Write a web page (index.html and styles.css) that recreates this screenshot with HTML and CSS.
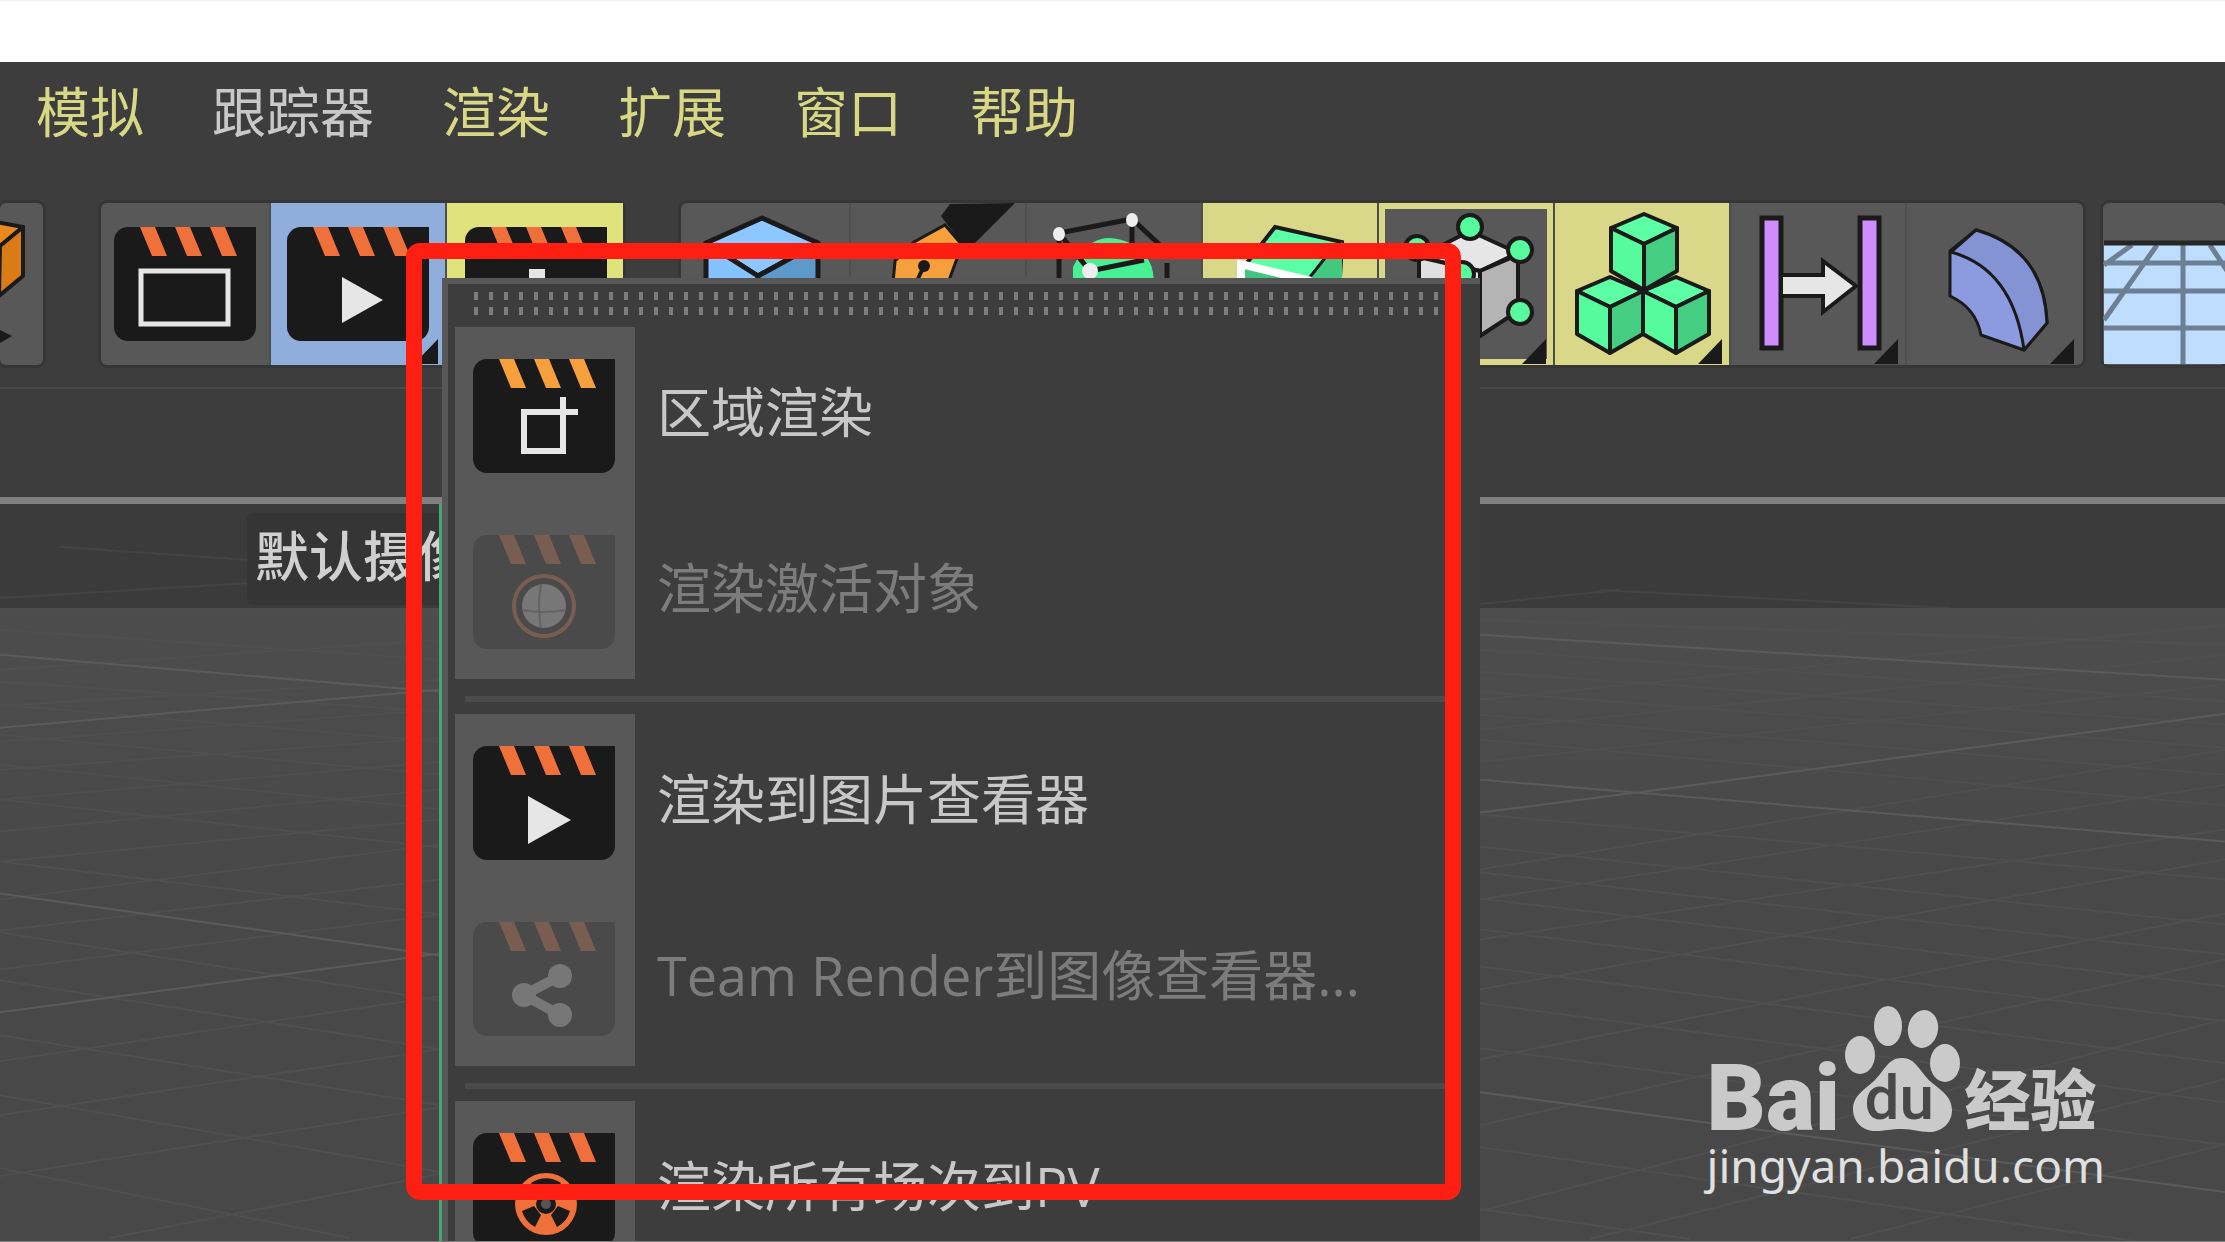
FILE: index.html
```
<!DOCTYPE html>
<html lang="zh-CN">
<head>
    <meta charset="UTF-8">
    <meta name="viewport" content="width=device-width, initial-scale=1.0">
    <title>渲染菜单</title>
    <link rel="stylesheet" href="styles.css">
</head>
<body>
    <!-- shared icon parts -->
    <svg class="defs" aria-hidden="true">
        <symbol id="clapper" viewBox="0 0 142 114">
            <path class="board" d="M14 0H142V100a14 14 0 0 1-14 14H14a14 14 0 0 1-14-14V14A14 14 0 0 1 14 0z"/>
            <path fill="currentColor" d="M26 0h15l12 29H38zM61 0h15l12 29H73zM96 0h15l12 29h-15z"/>
        </symbol>
        <symbol id="corner" viewBox="0 0 24 25"><path d="M0 25L24 0V25z" fill="#1a1a1a"/></symbol>
        <symbol id="cube" viewBox="0 0 72 82">
            <g stroke="#1a1a1a" stroke-width="4" stroke-linejoin="round">
                <path d="M36 3L69 17L36 33L3 17z" fill="#5cffa4"/>
                <path d="M3 17L36 33V79L3 60z" fill="#55fb9d"/>
                <path d="M69 17L36 33V79L69 60z" fill="#45cd82"/>
            </g>
        </symbol>
    </svg>

    <div class="page-top"></div>
    <main class="app">
        <nav class="menubar">
            <button>模拟</button>
            <button class="plain">跟踪器</button>
            <button>渲染</button>
            <button>扩展</button>
            <button>窗口</button>
            <button>帮助</button>
        </nav>

        <div class="toolbar">
            <div class="group first">
                <button class="tool" aria-label="坐标系统">
                    <svg viewBox="0 0 43 164"><g stroke="#1a1a1a" stroke-width="4" stroke-linejoin="round"><path d="M-20 16L23 24L0 43L-20 50z" fill="#e88a1d"/><path d="M0 43L23 24V73L-1 93z" fill="#d97c17"/></g><path d="M0 127l12 6l-12 7z" fill="#1a1a1a"/></svg>
                </button>
            </div>
            <div class="group">
                <button class="tool" aria-label="渲染活动视图">
                    <svg class="red" viewBox="0 0 170 164"><use href="#clapper" x="13" y="24" width="142" height="114"/><rect x="40" y="68" width="87" height="53" fill="none" stroke="#e6e6e6" stroke-width="5"/></svg>
                </button>
                <button class="tool active" aria-label="渲染到图片查看器">
                    <svg class="red" viewBox="0 0 176 164"><use href="#clapper" x="16" y="24" width="142" height="114"/><path d="M71 74V120L112 97z" fill="#e6e6e6"/><use href="#corner" x="143" y="136" width="24" height="25"/></svg>
                </button>
                <button class="tool lit" aria-label="编辑渲染设置">
                    <svg class="red" viewBox="0 0 176 164"><use href="#clapper" x="18" y="24" width="142" height="114"/><path d="M82 66h16v14l12-5l10 10l-6 12l14 4H62l10-16l-6-2l8-8l8 5z" fill="#e6e6e6"/></svg>
                </button>
            </div>
            <div class="group tight">
                <button class="tool" aria-label="立方体">
                    <svg viewBox="0 0 170 164"><g stroke="#1a1a1a" stroke-width="5" stroke-linejoin="round"><path d="M81 15L137 40L77 73L25 40z" fill="#8cc8ff"/><path d="M25 40L77 73V140L25 105z" fill="#84c3ff"/><path d="M137 40L77 73V140L137 105z" fill="#5c9acb"/></g></svg>
                </button>
                <button class="tool" aria-label="样条画笔">
                    <svg viewBox="0 0 176 164"><path d="M99 1L164 0L124 40H110L90 13z" fill="#1a1a1a"/><path d="M94 22L111 42L97 80H42L44 58L63 39z" fill="#f5a03c" stroke="#1a1a1a" stroke-width="3"/><circle cx="73" cy="63" r="6" fill="#1a1a1a"/><path d="M73 63L63 84" stroke="#1a1a1a" stroke-width="4"/></svg>
                </button>
                <button class="tool" aria-label="细分曲面">
                    <svg viewBox="0 0 176 164"><path d="M46 84V64Q60 35 82 35Q108 36 122 58Q127 66 127 84z" fill="#48f094"/><path d="M32 84V30L105 16L133 42M140 60V90M105 16V40M32 30L63 68L117 57" fill="none" stroke="#1a1a1a" stroke-width="5"/><g fill="#eee"><ellipse cx="32" cy="31" rx="6" ry="7"/><ellipse cx="105" cy="17" rx="6" ry="7"/><ellipse cx="63" cy="68" rx="8" ry="8"/></g></svg>
                </button>
                <button class="tool olive" aria-label="挤压">
                    <svg viewBox="0 0 176 164"><path d="M72 24L139 39L135 110L36 100V70z" fill="#5affa6" stroke="#1a1a1a" stroke-width="4"/><path d="M122 55L139 39V110L108 74z" fill="#42c97f"/><path d="M122 55L107 74" stroke="#1a1a1a" stroke-width="3"/><path d="M38 100V60L108 78V100z" fill="#43c480"/><path d="M38 100V61L108 78" fill="none" stroke="#fff" stroke-width="8"/></svg>
                </button>
                <button class="tool framed" aria-label="阵列">
                    <svg viewBox="0 0 176 164"><g stroke="#1a1a1a" stroke-width="4" stroke-linejoin="round"><path d="M91 28L139 50L101 68L40 54z" fill="#e6e6e6"/><path d="M40 54L101 68V133L40 110z" fill="#e0e0e0"/><path d="M139 52L101 68V133L139 108z" fill="#b4b4b4"/><g fill="#55fb9d"><circle cx="91" cy="24" r="12"/><circle cx="141" cy="47" r="12"/><circle cx="38" cy="45" r="12"/><circle cx="141" cy="109" r="12"/><circle cx="83" cy="71" r="12"/></g></g><use href="#corner" x="143" y="136" width="24" height="25"/></svg>
                </button>
                <button class="tool olive" aria-label="克隆">
                    <svg viewBox="0 0 176 164"><use href="#cube" x="53" y="8" width="72" height="82"/><use href="#cube" x="19" y="71" width="72" height="82"/><use href="#cube" x="85" y="71" width="72" height="82"/><use href="#corner" x="143" y="136" width="24" height="25"/></svg>
                </button>
                <button class="tool" aria-label="线性域">
                    <svg viewBox="0 0 176 164"><g fill="#cf8cff" stroke="#1a1a1a" stroke-width="5"><rect x="31" y="15" width="19" height="130"/><rect x="129" y="15" width="19" height="130"/><path d="M50 72H92V58L125 83L92 109V93H50z" fill="#e6e6e6" stroke-width="4"/></g><use href="#corner" x="143" y="136" width="24" height="25"/></svg>
                </button>
                <button class="tool" aria-label="弯曲">
                    <svg viewBox="0 0 176 164"><g stroke="#1a1a1a" stroke-width="3" stroke-linejoin="round"><path d="M69 27L43 48V93Q69 105 74 132L117 147L140 120Q137 46 69 27z" fill="#8c9be0"/><path d="M69 27Q137 46 140 120L117 147Q106 66 44 49z" fill="#8493d3"/></g><use href="#corner" x="143" y="136" width="24" height="25"/></svg>
                </button>
            </div>
            <div class="group last">
                <button class="tool" aria-label="地面">
                    <svg viewBox="0 0 123 164" preserveAspectRatio="xMinYMin slice"><path d="M1 40H123V161H1z" fill="#bfdeff"/><path d="M1 60H123M1 88H123M1 125H123M80 42V161M29 42L1 62M54 42L1 117M107 42L140 92" fill="none" stroke="#6d7f92" stroke-width="5"/><path d="M1 40H123" stroke="#262626" stroke-width="5"/></svg>
                </button>
            </div>
        </div>
        <div class="strip"></div>

        <section class="viewport">
            <svg class="grid" viewBox="0 504 2225 738" preserveAspectRatio="none">
                <path class="minor" d="M0 630L440 660M0 670L440 640M0 682L440 712M0 706L440 680M0 705L440 742M0 742L440 710M0 735L440 775M0 770L440 738M0 765L440 810M0 800L440 762M0 800L440 848M0 832L440 790M0 862L440 915M0 862L440 820M0 900L440 845M0 931L440 880M0 970L440 915M0 933L440 1001M0 981L440 1050M0 1036L440 1106M0 1096L440 1173M0 1169L350 1239M0 1062L440 997M0 1116L440 1050M0 1177L440 1108M110 1239L440 1175"/>
                <path class="minor" d="M1480 620L2225 645M1480 650L2225 702M1480 672L2225 725M1480 692L2225 748M1480 715L2225 775M1480 740L2225 806M1480 815L2225 880M1480 700L2225 625M1480 730L2225 655M1480 762L2225 685M1480 847L2225 925M1480 873L2225 955M1480 899L2225 987M1480 930L2225 1022M1480 967L2225 1064M1480 1004L2225 1103M1480 1049L2225 1146M1480 1148L2225 1255M1480 1210L1690 1240M1480 870L2225 750M1480 900L2225 785M1480 940L2225 830M1480 990L2225 860M1480 1060L2225 914M1480 1126L2225 960M1480 1212L2225 1020M1590 1240L2225 1080M1850 1240L2225 1145"/>
                <path class="major" d="M0 655L440 692M0 728L440 690M0 894L440 956M0 1013L440 954M1480 635L2225 680M1480 780L2225 842M1480 813L1660 790L2225 714M1480 1093L2225 1193"/>
            </svg>
            <svg class="haze" viewBox="0 504 2225 104" preserveAspectRatio="none">
                <path d="M60 547L250 560M0 598L250 583M1480 604L1620 590M1600 590L1950 608"/>
            </svg>
            <span class="camera">默认摄像机</span>
            <div class="axis"></div>
        </section>

        <!-- popup of the render button -->
        <div class="popup">
            <div class="grip"></div>
            <ul>
                <li><button><span class="icon"><svg class="amber" viewBox="0 0 142 114"><use href="#clapper" width="142" height="114"/><path d="M90 92H51V53H105M90 38V95" fill="none" stroke="#e6e6e6" stroke-width="6"/></svg></span>区域渲染</button></li>
                <li><button disabled><span class="icon"><svg class="red" viewBox="0 0 142 114"><use href="#clapper" width="142" height="114"/><circle cx="71" cy="71" r="30" fill="none" stroke="#f0703c" stroke-width="4"/><circle cx="71" cy="71" r="22" fill="#e6e6e6"/><path d="M49 75Q71 79 93 75M68 49Q64 71 68 93" fill="none" stroke="#888" stroke-width="2"/></svg></span>渲染激活对象</button></li>
            </ul>
            <hr>
            <ul>
                <li><button><span class="icon"><svg class="red" viewBox="0 0 142 114"><use href="#clapper" width="142" height="114"/><path d="M55 50V98L98 74z" fill="#e6e6e6"/></svg></span>渲染到图片查看器</button></li>
                <li><button disabled><span class="icon"><svg class="red" viewBox="0 0 142 114"><use href="#clapper" width="142" height="114"/><path d="M87 54L51 73L87 93" fill="none" stroke="#e6e6e6" stroke-width="10"/><g fill="#e6e6e6"><circle cx="87" cy="54" r="12"/><circle cx="51" cy="73" r="12"/><circle cx="87" cy="93" r="12"/></g></svg></span>Team Render到图像查看器...</button></li>
            </ul>
            <hr>
            <ul>
                <li><button><span class="icon"><svg class="red" viewBox="0 0 142 114"><use href="#clapper" width="142" height="114"/><circle cx="73" cy="71" r="31" fill="#f0703c"/><g fill="#1a1a1a"><path d="M68 82L62 94A26 26 0 0 1 49 78L61 73zM78 82L84 94A26 26 0 0 0 97 78L85 73zM66 61L58 50A26 26 0 0 1 88 50L80 61z"/><circle cx="73" cy="71" r="10"/></g><circle cx="73" cy="71" r="5" fill="#555"/></svg></span>渲染所有场次到PV</button></li>
            </ul>
        </div>

        <div class="highlight"></div>

        <a class="watermark" href="#">
            <span class="brand">
                <span class="bai">Bai</span>
                <span class="paw">
                    <svg viewBox="0 0 116 126"><g fill="#cacaca"><ellipse cx="15" cy="49" rx="15" ry="19"/><ellipse cx="43" cy="20" rx="14" ry="20"/><ellipse cx="78" cy="23" rx="15" ry="19" transform="rotate(10 78 23)"/><ellipse cx="100" cy="57" rx="15" ry="19"/><path d="M57 52C71 52 74 65 86 76C96 84 107 91 107 104C107 118 96 126 84 126C73 126 69 123 57 123C45 123 40 125 30 125C17 125 8 115 8 103C8 90 20 83 29 75C41 63 43 52 57 52z"/></g></svg>
                    <span class="du">du</span>
                </span>
                <span class="jingyan">经验</span>
            </span>
            <span class="site">jingyan.baidu.com</span>
        </a>
    </main>
</body>
</html>
```
FILE: styles.css
```
* {
    box-sizing: border-box;
}
body {
    margin: 0;
    min-height: 100vh;
    display: flex;
    flex-direction: column;
    background: #fff;
    font-family: "Open Sans", "Noto Sans CJK SC", sans-serif;
    font-size: 54px;
    overflow: hidden;
}
button {
    margin: 0;
    padding: 0;
    border: none;
    background: none;
    color: inherit;
    font: inherit;
}
svg {
    display: block;
}
.defs {
    position: absolute;
    width: 0;
    height: 0;
}
.page-top {
    height: 62px;
    border-top: 1px solid #f0f0f0;
}
.app {
    position: relative;
    flex: 1;
    display: flex;
    flex-direction: column;
    background: #3d3d3d;
    border-bottom: 1px solid #808080;
    overflow: hidden;
}

/* menu bar */
.menubar {
    display: flex;
    align-items: center;
    gap: 68px;
    height: 141px;
    padding: 0 0 42px 36px;
    color: #d8d884;
    line-height: 60px;
    white-space: nowrap;
}
.menubar .plain {
    color: #c8c8c8;
}

/* toolbar */
.toolbar {
    display: flex;
    height: 186px;
    padding-bottom: 22px;
    border-bottom: 2px solid #4b4b4b;
}
.group {
    display: flex;
    flex: none;
    margin-right: 58px;
    border-radius: 6px;
    background: #585858;
    box-shadow: 0 0 0 3px #363636;
}
.group.tight {
    margin-right: 20px;
}
.group.last {
    flex: 1;
    margin-right: 0;
}
.tool {
    width: 176px;
    height: 162px;
    border-right: 2px solid #4e4e4e;
    overflow: hidden;
}
.tool:first-child {
    width: 170px;
}
.tool:last-child {
    border-right: none;
}
.first .tool {
    width: 43px;
}
.last .tool {
    width: 100%;
}
.tool svg {
    height: 164px;
}
.tool.active {
    background: #8faedc;
}
.tool.lit {
    background: #e0e27c;
}
.tool.olive {
    background: #d8d888;
}
.tool.framed {
    box-shadow: inset 0 0 0 6px #d8d888;
}
.board {
    fill: #1a1a1a;
}
.red {
    color: #f0703c;
}
.amber {
    color: #f5a03c;
}
.strip {
    height: 115px;
    border-bottom: 7px solid #808080;
}

/* viewport */
.viewport {
    position: relative;
    flex: 1;
    background: linear-gradient(#4f4f4f, #484848 50%);
}
.grid, .haze {
    position: absolute;
    top: 0;
    left: 0;
    width: 100%;
    height: 100%;
}
.haze {
    height: 104px;
    background: #3b3b3b;
}
.grid path, .haze path {
    fill: none;
    stroke-width: 2;
}
.minor {
    stroke: #4f4f4f;
}
.major {
    stroke: #5b5b5b;
}
.haze path {
    stroke: #444;
}
.camera {
    position: absolute;
    top: 9px;
    left: 247px;
    padding: 0 8px 6px;
    border-radius: 6px;
    background: #353535;
    color: #d0d0d0;
    font-weight: 500;
    line-height: 86px;
    white-space: nowrap;
}
.axis {
    position: absolute;
    top: 0;
    bottom: 0;
    left: 439px;
    width: 3px;
    background: #45a872;
}

/* popup menu */
.popup {
    position: absolute;
    top: 216px;
    left: 442px;
    width: 1038px;
    padding: 8px 20px 0 7px;
    border: solid #575757;
    border-width: 6px 0 0 6px;
    background: #3d3d3d;
    color: #c8c8c8;
}
.grip {
    height: 23px;
    margin: 0 5px 12px 19px;
    background: conic-gradient(from 90deg at 11px 7px, #7c7c7c 25%, transparent 0) -11px -7px / 15px 15px;
}
.popup ul {
    margin: 0;
    padding: 0;
    list-style: none;
    background: linear-gradient(#585858, #585858) no-repeat 0 0 / 180px 100%;
}
.popup button {
    display: flex;
    align-items: center;
    width: 100%;
    height: 176px;
    padding-bottom: 12px;
    text-align: left;
    white-space: nowrap;
}
.popup button:disabled {
    color: #7c7c7c;
}
.popup button:disabled svg {
    opacity: 0.22;
}
.popup .icon {
    flex: none;
    width: 180px;
    margin-right: 22px;
    padding: 14px 0 0 18px;
}
.popup .icon svg {
    width: 142px;
    height: 114px;
}
.popup hr {
    height: 6px;
    margin: 17px 0 12px 10px;
    border: none;
    background: #4b4b4b;
}

/* red marker around the menu */
.highlight {
    position: absolute;
    top: 181px;
    left: 406px;
    width: 1055px;
    height: 957px;
    border: 16px solid #ff1f12;
    border-radius: 14px;
    pointer-events: none;
}

/* watermark */
.watermark {
    position: absolute;
    right: 120px;
    bottom: 43px;
    color: #cacaca;
    text-decoration: none;
}
.brand {
    display: flex;
    align-items: flex-end;
    height: 130px;
    line-height: 66px;
}
.bai {
    width: 138px;
    font-family: Roboto, sans-serif;
    font-size: 92px;
    font-weight: 900;
}
.paw {
    position: relative;
    width: 116px;
    margin-right: 4px;
}
.paw svg {
    width: 116px;
    height: 126px;
}
.du {
    position: absolute;
    left: 20px;
    bottom: 4px;
    color: #484848;
    font-family: Roboto, sans-serif;
    font-size: 62px;
    font-weight: 500;
    line-height: 60px;
}
.jingyan {
    font-size: 66px;
    font-weight: 900;
}
.site {
    display: block;
    color: #e0e0e0;
    font-family: "Noto Sans", sans-serif;
    font-size: 46px;
    line-height: 66px;
}
```
